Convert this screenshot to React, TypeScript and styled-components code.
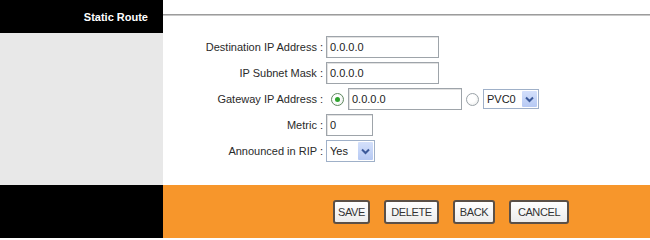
import React from "react";
import styled, { createGlobalStyle } from "styled-components";

const Global = createGlobalStyle`
  html, body { margin: 0; padding: 0; background: #fff; }
  body { font-family: "Liberation Sans", Arial, sans-serif; }
`;

const Page = styled.div`
  width: 650px;
  height: 238px;
  display: grid;
  grid-template-columns: 163px 1fr;
  grid-template-rows: 185px 53px;
  overflow: hidden;
`;

const Sidebar = styled.div`
  display: flex;
  flex-direction: column;
  background: #e8e8e8;
`;

const SideHeader = styled.div`
  height: 33px;
  background: #000;
  color: #fff;
  font-weight: bold;
  font-size: 11px;
  display: flex;
  align-items: center;
  justify-content: flex-end;
  padding-right: 15px;
  box-sizing: border-box;
`;

const Content = styled.div`
  display: flex;
  flex-direction: column;
  background: #fff;
`;

const HeaderBar = styled.div`
  height: 33px;
  padding-top: 14px;
  box-sizing: border-box;
`;

const Rule = styled.div`
  height: 1px;
  background: #9c9c9c;
  border-bottom: 1px solid #c9c9c9;
`;

const Form = styled.div`
  display: grid;
  grid-template-columns: 163px auto;
  grid-auto-rows: 22px;
  row-gap: 4px;
  padding-top: 3px;
  align-items: center;
`;

const Label = styled.div`
  font-size: 11px;
  color: #2a2a2a;
  text-align: right;
  white-space: nowrap;
  padding-right: 3px;
`;

const Field = styled.div`
  display: flex;
  align-items: center;
  gap: 4px;
`;

const TextBox = styled.div<{ $w: number }>`
  width: ${(p) => p.$w}px;
  height: 22px;
  box-sizing: border-box;
  border: 1px solid #9ea4aa;
  box-shadow: inset 1px 1px 0 #e2e2e2;
  background: #fff;
  font-size: 11px;
  color: #222;
  display: flex;
  align-items: center;
  padding-left: 3px;
`;

const Radio = styled.span<{ $checked?: boolean; $ml?: number }>`
  width: 13px;
  height: 13px;
  border-radius: 50%;
  box-sizing: border-box;
  border: 1px solid ${(p) => (p.$checked ? "#5f8a5f" : "#9aa2a8")};
  background: radial-gradient(circle at 40% 40%, #fff 40%, #e4e6e4 100%);
  margin-left: ${(p) => p.$ml ?? 0}px;
  display: flex;
  align-items: center;
  justify-content: center;
  &::after {
    content: "";
    display: ${(p) => (p.$checked ? "block" : "none")};
    width: 5px;
    height: 5px;
    border-radius: 50%;
    background: #2fa42f;
  }
`;

const Select = styled.div<{ $w: number; $h: number }>`
  width: ${(p) => p.$w}px;
  height: ${(p) => p.$h}px;
  box-sizing: border-box;
  border: 1px solid #9fb0c8;
  background: #fff;
  display: flex;
  align-items: stretch;
  font-size: 11px;
  color: #222;
`;

const SelectText = styled.span`
  flex: 1;
  display: flex;
  align-items: center;
  padding-left: 3px;
`;

const SelectBtn = styled.span`
  width: 15px;
  margin: 1px;
  background: linear-gradient(#d4e0fb, #b6c9f3);
  border-radius: 1px;
  display: flex;
  align-items: center;
  justify-content: center;
`;

const FooterSide = styled.div`
  background: #000;
`;

const Footer = styled.div`
  background: #f7962b;
  display: flex;
  align-items: center;
  padding-left: 170px;
  gap: 14px;
`;

const Button = styled.div<{ $w: number }>`
  width: ${(p) => p.$w}px;
  height: 24px;
  box-sizing: border-box;
  border: 2px solid #5b5047;
  border-radius: 3px;
  background: linear-gradient(#ffffff, #ececec);
  font-size: 11px;
  color: #333;
  display: flex;
  align-items: center;
  justify-content: center;
  letter-spacing: -0.4px;
`;

const Chevron = () => (
  <svg width="9" height="7" viewBox="0 0 9 7">
    <path d="M1 1.5 L4.5 5 L8 1.5" fill="none" stroke="#3c5a9a" strokeWidth="2" />
  </svg>
);

export default function App() {
  return (
    <>
      <Global />
      <Page>
        <Sidebar>
          <SideHeader>Static Route</SideHeader>
        </Sidebar>
        <Content>
          <HeaderBar>
            <Rule />
          </HeaderBar>
          <Form>
            <Label>Destination IP Address :</Label>
            <Field>
              <TextBox $w={113}>0.0.0.0</TextBox>
            </Field>
            <Label>IP Subnet Mask :</Label>
            <Field>
              <TextBox $w={113}>0.0.0.0</TextBox>
            </Field>
            <Label>Gateway IP Address :</Label>
            <Field>
              <Radio $checked $ml={5} />
              <TextBox $w={114}>0.0.0.0</TextBox>
              <Radio />
              <Select $w={56} $h={20}>
                <SelectText>PVC0</SelectText>
                <SelectBtn>
                  <Chevron />
                </SelectBtn>
              </Select>
            </Field>
            <Label>Metric :</Label>
            <Field>
              <TextBox $w={47}>0</TextBox>
            </Field>
            <Label>Announced in RIP :</Label>
            <Field>
              <Select $w={49} $h={22}>
                <SelectText>Yes</SelectText>
                <SelectBtn>
                  <Chevron />
                </SelectBtn>
              </Select>
            </Field>
          </Form>
        </Content>
        <FooterSide />
        <Footer>
          <Button $w={37}>SAVE</Button>
          <Button $w={55}>DELETE</Button>
          <Button $w={42}>BACK</Button>
          <Button $w={60}>CANCEL</Button>
        </Footer>
      </Page>
    </>
  );
}
